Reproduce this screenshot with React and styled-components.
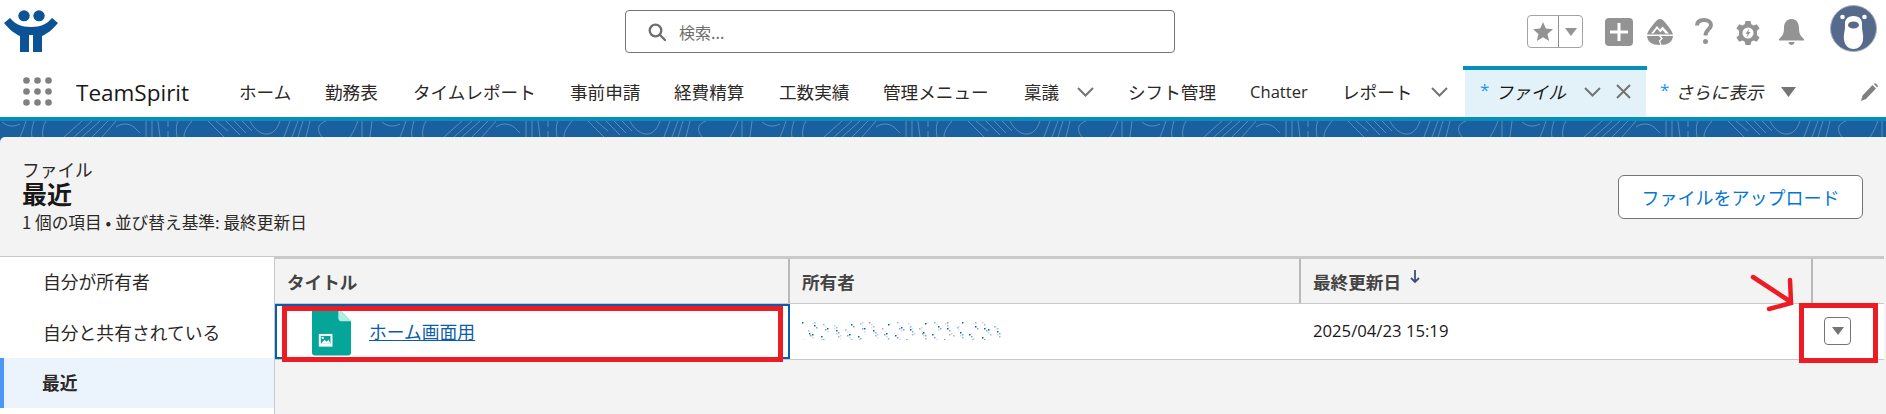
import React from 'react';
import styled, { createGlobalStyle } from 'styled-components';

const JP = `'Noto Sans CJK JP', 'Noto Sans', sans-serif`;
const LATIN = `'Open Sans', sans-serif`;

const GlobalStyle = createGlobalStyle`
  html, body {
    margin: 0;
    padding: 0;
    background: #fff;
  }
  body {
    font-family: 'Open Sans', ${JP};
    color: #181818;
  }
`;

const Page = styled.div`
  position: relative;
  width: 1886px;
  height: 414px;
  overflow: hidden;
  background: #fff;
`;

/* global header */
const TopBar = styled.header`
  display: flex;
  align-items: flex-start;
  height: 66px;
  padding-left: 4px;
  box-sizing: border-box;
`;

const Logo = styled.svg`
  width: 54px;
  height: 42px;
  margin-top: 10px;
  flex: none;
`;

const SearchBox = styled.div`
  display: flex;
  align-items: center;
  box-sizing: border-box;
  width: 550px;
  height: 43px;
  margin: 10px 0 0 567px;
  padding-left: 22px;
  border: 1px solid #747474;
  border-radius: 4px;
  color: #706e6b;
  font-size: 16px;
  font-family: ${JP};
`;

const SearchIcon = styled.svg`
  width: 18px;
  height: 18px;
  margin-right: 13px;
`;

const Tools = styled.div`
  display: flex;
  align-items: flex-start;
  margin-left: 352px;
`;

const FavGroup = styled.div`
  display: flex;
  box-sizing: border-box;
  width: 56px;
  height: 33px;
  margin-top: 15px;
  border: 1px solid #a3a3a3;
  border-radius: 4px;
`;

const FavCell = styled.div`
  display: flex;
  align-items: center;
  justify-content: center;
  width: ${({ $w }) => $w}px;
  border-right: ${({ $line }) => ($line ? '1px solid #8f8f8f' : 'none')};
`;

const ToolIcon = styled.svg`
  flex: none;
  width: ${({ $w }) => $w}px;
  height: ${({ $h }) => $h}px;
  margin-top: ${({ $top }) => $top}px;
  margin-left: ${({ $left }) => $left}px;
`;

/* app nav */
const NavBar = styled.nav`
  display: flex;
  align-items: stretch;
  height: 51px;
  box-sizing: border-box;
  padding-left: 23px;
`;

const Launcher = styled.svg`
  width: 29px;
  height: 29px;
  margin-top: 11px;
  flex: none;
`;

const AppName = styled.div`
  width: 163px;
  margin: 1px 0 0 24px;
  line-height: 51px;
  font-size: 22.5px;
  font-family: ${LATIN};
  color: #181818;
`;

const NavItem = styled.div`
  display: flex;
  align-items: center;
  flex: none;
  width: ${({ $w }) => $w}px;
  font-size: 17.6px;
  font-family: ${JP};
  white-space: nowrap;
  color: #2b2826;
`;

const ChatterItem = styled(NavItem)`
  font-family: ${LATIN};
  font-size: 16.6px;
`;

const MoreTab = styled(NavItem)`
  box-sizing: border-box;
  padding-left: 14px;
  font-style: italic;
`;

const Chevron = styled.svg`
  width: 17px;
  height: 10px;
  flex: none;
  margin-left: ${({ $left }) => $left || 18}px;
`;

const CloseIcon = styled.svg`
  width: 15px;
  height: 15px;
  flex: none;
  margin-left: 15px;
`;

const MoreCaret = styled.svg`
  width: 15px;
  height: 10px;
  flex: none;
  margin-left: 18px;
`;

const ActiveTab = styled.div`
  display: flex;
  align-items: center;
  flex: none;
  box-sizing: border-box;
  width: 181px;
  margin-left: 1px;
  padding-left: 15px;
  background: #e3f2f8;
  position: relative;
  font-family: ${JP};
  font-size: 17.6px;
  font-style: italic;

  &::before {
    content: '';
    position: absolute;
    left: -2px;
    right: -1px;
    top: 0;
    height: 4px;
    background: #0590bc;
  }
`;

const Star = styled.span`
  color: #1b96ff;
  font-size: 17px;
  font-family: ${LATIN};
  font-style: normal;
  margin-right: 6px;
  margin-top: -5px;
`;

const Stripe = styled.div`
  height: 4px;
  background: #0590bc;
`;

const Band = styled.svg`
  display: block;
  width: 100%;
  height: 16px;
  background: #1a5f9e;
`;

/* list view */
const Workspace = styled.main`
  height: 277px;
  background: #1a5f9e;
`;

const ListHead = styled.div`
  display: flex;
  justify-content: space-between;
  align-items: flex-start;
  box-sizing: border-box;
  height: 119px;
  padding: 22px 23px 0 22px;
  background: #f3f3f3;
  border-radius: 5px 0 0 0;
`;

const Titles = styled.div`
  font-family: ${JP};
`;

const Eyebrow = styled.div`
  font-size: 17.7px;
  line-height: 20px;
  color: #2b2826;
`;

const Heading = styled.h1`
  margin: -1px 0 0;
  font-size: 25px;
  line-height: 30px;
  font-weight: 700;
  color: #181818;
`;

const Meta = styled.div`
  margin-top: 4px;
  font-size: 16.7px;
  line-height: 20px;
  color: #2b2826;
`;

const UploadButton = styled.button`
  width: 245px;
  height: 44px;
  margin: 16px 0 0;
  border: 1px solid #747474;
  border-radius: 6px;
  background: #fff;
  color: #0176d3;
  font-family: ${JP};
  font-size: 18px;
  padding: 0;
`;

const ListBody = styled.div`
  display: flex;
  height: 158px;
  background: #f3f3f3;
`;

const Sidebar = styled.aside`
  box-sizing: border-box;
  width: 275px;
  flex: none;
  background: #fff;
  border-top: 1px solid #c9c9c9;
  border-right: 1px solid #c9c9c9;
`;

const SideItem = styled.div`
  box-sizing: border-box;
  height: ${({ $active }) => ($active ? 50 : 50.5)}px;
  padding-left: ${({ $active }) => ($active ? 38 : 43)}px;
  padding-bottom: 2px;
  display: flex;
  align-items: center;
  font-family: ${JP};
  font-size: 17.8px;
  font-weight: ${({ $active }) => ($active ? 700 : 400)};
  color: #2b2826;
  background: ${({ $active }) => ($active ? '#ebf3fc' : '#fff')};
  border-left: ${({ $active }) => ($active ? '4px solid #4a97f7' : 'none')};
`;

const Table = styled.section`
  flex: 1;
  margin-right: 2px;
  border-top: 3px solid #c9c9c9;
`;

const Cols = `515px 511px 512px 1fr`;

const HeaderRow = styled.div`
  display: grid;
  grid-template-columns: ${Cols};
  height: 44px;
  border-bottom: 1px solid #c9c9c9;
`;

const HeadCell = styled.div`
  display: flex;
  align-items: center;
  padding-left: 12px;
  font-family: ${JP};
  font-size: 17.6px;
  font-weight: 700;
  color: #444;
  border-right: ${({ $last }) => ($last ? 'none' : '2px solid #b9b9b9')};
  box-sizing: border-box;
`;

const SortArrow = styled.svg`
  width: 12px;
  height: 16px;
  margin: -8px 0 0 8px;
`;

const Row = styled.div`
  display: grid;
  grid-template-columns: ${Cols};
  height: 55px;
  background: #fff;
  border-bottom: 1px solid #c9c9c9;
`;

const TitleCell = styled.div`
  display: flex;
  align-items: center;
  box-sizing: border-box;
  padding-left: 35px;
  border: 2px solid #0b5cab;
  overflow: hidden;
`;

const FileIcon = styled.svg`
  width: 39px;
  height: 48px;
  flex: none;
`;

const FileLink = styled.a`
  margin: -2px 0 0 18px;
  color: #0b5cab;
  text-decoration: underline;
  font-family: ${JP};
  font-size: 17.8px;
`;

const TextCell = styled.div`
  display: flex;
  align-items: center;
  padding-left: 12px;
  font-family: ${LATIN};
  font-size: 16.7px;
  color: #181818;
  margin-top: -2px;
`;

const ActionCell = styled.div`
  display: flex;
  align-items: center;
  padding-left: 11px;
`;

const MenuButton = styled.div`
  display: flex;
  align-items: center;
  justify-content: center;
  box-sizing: border-box;
  width: 27px;
  height: 28px;
  margin-top: -1px;
  border: 1px solid #747474;
  border-radius: 4px;
  background: #fff;
`;

/* red annotations drawn over the screenshot */
const RedBox = styled.div`
  position: absolute;
  box-sizing: border-box;
  left: ${({ $x }) => $x}px;
  top: ${({ $y }) => $y}px;
  width: ${({ $w }) => $w}px;
  height: ${({ $h }) => $h}px;
  border: 5px solid #ed1c24;
`;

const RedArrow = styled.svg`
  position: absolute;
  left: 1748px;
  top: 272px;
  width: 50px;
  height: 44px;
`;

const navItems = [
  ['ホーム', 86],
  ['勤務表', 88],
  ['タイムレポート', 157],
  ['事前申請', 104],
  ['経費精算', 105],
  ['工数実績', 104],
  ['管理メニュー', 141],
];

// scattered dots standing in for the blurred owner name
const blurDots = Array.from({ length: 150 }, (_, i) => {
  const h = (i * 2654435761) % 4294967296;
  const x = (h >>> 7) % 198;
  const y = (h >>> 19) % 18;
  const tone = ['#0b5cab', '#7aa7d6', '#c4d8ec', '#a8b4c2', '#dfe8f2'][i % 5];
  return { x, y, tone };
});

const Grey = '#939393';

const TeamLogo = () => (
  <Logo viewBox="0 0 54 42">
    <g fill="#0b5394">
      <ellipse cx="20" cy="5.8" rx="5.7" ry="5.5" />
      <ellipse cx="35" cy="5.8" rx="5.7" ry="5.5" />
      <path d="M0 13 L6 8 C11 14 17 17 27 17 C37 17 43 14 48 8 L54 13 C48 20 43 24 38 26 V42 H29 V25 H25 V42 H16 V26 C11 24 6 20 0 13 Z" />
    </g>
  </Logo>
);

const Trailhead = () => (
  <ToolIcon $w={26} $h={26} $top={19} $left={14} viewBox="0 0 26 26">
    <path
      fill={Grey}
      d="M13 0 C15 0 17 2 19 4.5 C22 8 25 12 26 15.5 L0 15.5 C1 12 4 8 7 4.5 C9 2 11 0 13 0 Z"
    />
    <path
      fill="#fff"
      d="M4 14.5 L10 7 L13 10.5 L15.5 7.5 L22 14.5 L18.5 14.5 L15.5 11 L13.5 13.5 L10 9.8 L6.5 14.5 Z"
    />
    <path fill={Grey} d="M0 17 L26 17 C25.5 23 21 26 13 26 C5 26 0.5 23 0 17 Z" />
    <path d="M12 16 L15 19.5 L12.5 22 L14 26" fill="none" stroke="#fff" strokeWidth="1.3" />
  </ToolIcon>
);

const Gear = () => (
  <ToolIcon $w={24} $h={24} $top={21} $left={23} viewBox="0 0 24 24">
    <path
      fill={Grey}
      fillRule="evenodd"
      d="M9.5 0 H14.5 L15.3 3.3 L17.6 4.5 L20.8 3.2 L23.6 7.5 L21 9.8 V14.2 L23.6 16.5 L20.8 20.8 L17.6 19.5 L15.3 20.7 L14.5 24 H9.5 L8.7 20.7 L6.4 19.5 L3.2 20.8 L0.4 16.5 L3 14.2 V9.8 L0.4 7.5 L3.2 3.2 L6.4 4.5 L8.7 3.3 Z M12 6.5 A5.5 5.5 0 1 0 12 17.5 A5.5 5.5 0 1 0 12 6.5 Z"
    />
    <path fill={Grey} d="M13.5 7.5 L9.5 12.8 H11.7 L10.5 16.5 L14.5 11 H12.3 Z" />
  </ToolIcon>
);

const DownChevron = ({ left }) => (
  <Chevron $left={left} viewBox="0 0 17 10" fill="none" stroke="#747474" strokeWidth="2">
    <path d="M1 1 L8.5 8.5 L16 1" />
  </Chevron>
);

const App = () => (
  <Page>
    <GlobalStyle />
    <TopBar>
      <TeamLogo />
      <SearchBox>
        <SearchIcon viewBox="0 0 18 18" fill="none" stroke="#706e6b" strokeWidth="2.3">
          <circle cx="7.5" cy="7.5" r="5.8" />
          <path d="M11.8 11.8 L17 17" strokeLinecap="round" />
        </SearchIcon>
        検索...
      </SearchBox>
      <Tools>
        <FavGroup>
          <FavCell $w={31} $line>
            <svg width="20" height="19" viewBox="0 0 20 19">
              <path
                fill={Grey}
                d="M10 0 L12.8 6.6 L20 7.2 L14.5 11.9 L16.2 19 L10 15.2 L3.8 19 L5.5 11.9 L0 7.2 L7.2 6.6 Z"
              />
            </svg>
          </FavCell>
          <FavCell $w={23}>
            <svg width="12" height="8" viewBox="0 0 12 8">
              <path fill={Grey} d="M0 0 H12 L6 8 Z" />
            </svg>
          </FavCell>
        </FavGroup>
        <ToolIcon $w={28} $h={28} $top={18} $left={22} viewBox="0 0 28 28">
          <rect width="28" height="28" rx="4" fill={Grey} />
          <path d="M14 5 V23 M5 14 H23" stroke="#fff" strokeWidth="3" />
        </ToolIcon>
        <Trailhead />
        <ToolIcon $w={18} $h={26} $top={18} $left={22} viewBox="0 0 18 26">
          <path
            d="M2 7.5 C2 3.5 5 2 9 2 C13 2 16 4 16 7 C16 11 10.5 11.5 10.5 17.5"
            fill="none"
            stroke={Grey}
            strokeWidth="4"
          />
          <circle cx="10.5" cy="23.5" r="2.5" fill={Grey} />
        </ToolIcon>
        <Gear />
        <ToolIcon $w={25} $h={26} $top={19} $left={19} viewBox="0 0 25 26">
          <path
            fill={Grey}
            d="M12.5 0 C17.5 0 20 4 20 9 C20 15 21.5 17 25 20 L25 21.5 L0 21.5 L0 20 C3.5 17 5 15 5 9 C5 4 7.5 0 12.5 0 Z M9.5 23 H15.5 C15.5 25 14 26 12.5 26 C11 26 9.5 25 9.5 23 Z"
          />
        </ToolIcon>
        <ToolIcon $w={47} $h={47} $top={5} $left={26} viewBox="0 0 47 47">
          <circle cx="23.5" cy="23.5" r="23" fill="#566a8c" stroke="#a9b0ba" strokeWidth="1" />
          <circle cx="12.5" cy="12" r="2.3" fill="#fff" />
          <circle cx="34.5" cy="12" r="2.3" fill="#fff" />
          <path
            fill="#fff"
            d="M23.5 11 C30 11 32.5 15 32 20 C31.5 25 34 30 33 35 C32 41 28 44 23.5 44 C19 44 15 41 14 35 C13 30 15.5 25 15 20 C14.5 15 17 11 23.5 11 Z"
          />
          <ellipse cx="23.5" cy="20" rx="5.5" ry="3.6" fill="#566a8c" />
        </ToolIcon>
      </Tools>
    </TopBar>

    <NavBar>
      <Launcher viewBox="0 0 29 29" fill="#808080">
        {[3.5, 14.5, 25.5].map(cy =>
          [3.5, 14.5, 25.5].map(cx => <circle key={`${cx}-${cy}`} cx={cx} cy={cy} r="3.3" />),
        )}
      </Launcher>
      <AppName>TeamSpirit</AppName>
      {navItems.map(([label, w]) => (
        <NavItem key={label} $w={w}>
          {label}
        </NavItem>
      ))}
      <NavItem $w={104}>
        稟議
        <DownChevron />
      </NavItem>
      <NavItem $w={122}>シフト管理</NavItem>
      <ChatterItem $w={92}>Chatter</ChatterItem>
      <NavItem $w={122}>
        レポート
        <DownChevron left={19} />
      </NavItem>
      <ActiveTab>
        <Star>*</Star>
        ファイル
        <DownChevron />
        <CloseIcon viewBox="0 0 15 15">
          <path d="M1 1 L14 14 M14 1 L1 14" stroke="#747474" strokeWidth="2" />
        </CloseIcon>
      </ActiveTab>
      <MoreTab $w={214}>
        <Star>*</Star>
        さらに表示
        <MoreCaret viewBox="0 0 15 10">
          <path fill="#747474" d="M0 0 H15 L7.5 10 Z" />
        </MoreCaret>
      </MoreTab>
      <ToolIcon $w={18} $h={19} $top={17} $left={0} viewBox="0 0 18 19">
        <path
          fill="#808080"
          d="M12.5 2 L16 5.5 L6 16 L1 18 L2.5 12.5 Z M13.7 0.8 C14.5 0 15.5 0 16.2 0.8 L17.3 2 C18 2.8 18 3.7 17.2 4.4 Z"
        />
      </ToolIcon>
    </NavBar>

    <Stripe />
    <Band>
      <defs>
        <pattern id="contours" width="380" height="16" patternUnits="userSpaceOnUse">
          <g fill="none" stroke="#fff" strokeOpacity="0.28" strokeWidth="1">
            <path d="M2 1 C8 6 14 6 20 3 M26 0 C24 6 22 12 20 16 M34 0 C32 6 31 12 32 16 M46 0 C43 5 42 11 43 16" />
            <path d="M82 0 L64 16 M92 0 L74 16 M100 0 L82 16 M108 0 L92 16 M116 0 L102 16" />
            <path d="M116 6 C122 2 128 2 134 6 L140 12 M146 0 V16 M152 0 V16 M158 0 L160 16 M168 0 V6 M168 10 V16 M178 0 C176 5 176 8 177 16 M192 0 C188 5 184 10 184 16" />
            <path d="M208 0 L224 16 M216 0 L228 10 M226 0 L240 14 M234 0 L246 12 M242 0 L252 10 M250 0 C256 12 268 18 276 8 C278 5 279 3 280 0" />
            <path d="M284 16 L290 0 M292 16 L298 0 M298 16 L303 0 M306 16 L310 0 M322 16 C316 8 318 3 326 0" />
            <path d="M350 16 C354 10 356 5 358 0 M362 16 V0 M370 16 L372 0" />
          </g>
        </pattern>
      </defs>
      <rect width="100%" height="16" fill="url(#contours)" />
    </Band>

    <Workspace>
      <ListHead>
        <Titles>
          <Eyebrow>ファイル</Eyebrow>
          <Heading>最近</Heading>
          <Meta>1 個の項目 • 並び替え基準: 最終更新日</Meta>
        </Titles>
        <UploadButton>ファイルをアップロード</UploadButton>
      </ListHead>
      <ListBody>
        <Sidebar>
          <SideItem>自分が所有者</SideItem>
          <SideItem>自分と共有されている</SideItem>
          <SideItem $active>最近</SideItem>
        </Sidebar>
        <Table>
          <HeaderRow>
            <HeadCell>タイトル</HeadCell>
            <HeadCell>所有者</HeadCell>
            <HeadCell>
              最終更新日
              <SortArrow viewBox="0 0 12 16" fill="none" stroke="#3e4f7a" strokeWidth="1.8">
                <path d="M6 1 V13 M2 9 L6 13 L10 9" />
              </SortArrow>
            </HeadCell>
            <HeadCell $last />
          </HeaderRow>
          <Row>
            <TitleCell>
              <FileIcon viewBox="0 0 40 48">
                <path
                  fill="#06a59a"
                  d="M3 0 H27 L40 13 V45 A3 3 0 0 1 37 48 H3 A3 3 0 0 1 0 45 V3 A3 3 0 0 1 3 0 Z"
                />
                <path fill="#b0eee5" d="M27 0 L40 13 H31 A4 4 0 0 1 27 9 Z" />
                <rect x="7" y="26" width="14" height="13" fill="#fff" />
                <rect x="9" y="28" width="10" height="8" fill="#06a59a" />
                <circle cx="11" cy="30" r="1.2" fill="#fff" />
                <path d="M9 36 L13 32 L15 34 L17 32 L19 36 Z" fill="#fff" />
              </FileIcon>
              <FileLink>ホーム画面用</FileLink>
            </TitleCell>
            <TextCell>
              <svg width="200" height="18" viewBox="0 0 200 18">
                {blurDots.map((d, i) => (
                  <rect key={i} x={d.x} y={d.y} width="1.5" height="1.5" fill={d.tone} />
                ))}
              </svg>
            </TextCell>
            <TextCell>2025/04/23 15:19</TextCell>
            <ActionCell>
              <MenuButton>
                <svg width="12" height="8" viewBox="0 0 12 8">
                  <path fill="#747474" d="M0 0 H12 L6 8 Z" />
                </svg>
              </MenuButton>
            </ActionCell>
          </Row>
        </Table>
      </ListBody>
    </Workspace>

    <RedBox $x={282} $y={306} $w={501} $h={56} />
    <RedBox $x={1799} $y={303} $w={79} $h={60} />
    <RedArrow viewBox="0 0 50 44" fill="none" stroke="#ed1c24" strokeWidth="4.5" strokeLinecap="round">
      <path d="M5 5 L43 30 M42 8 L43 31 L21 37" />
    </RedArrow>
  </Page>
);

export default App;
